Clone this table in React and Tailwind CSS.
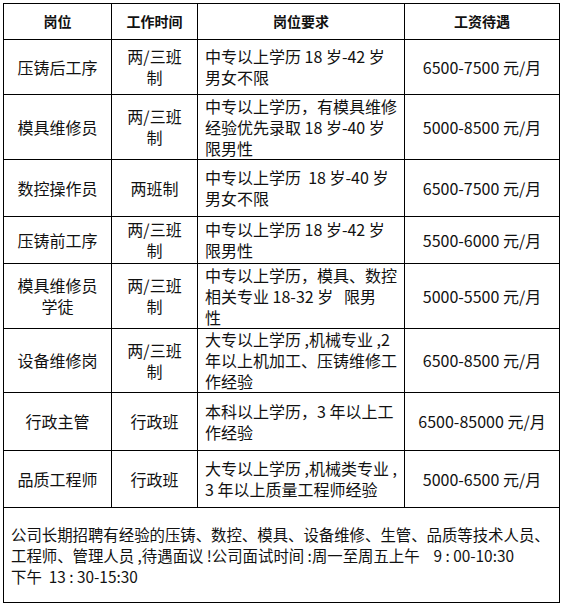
import React from 'react';

const rows = [
  { h: 'h-[55px]', name: ['压铸后工序'], shift: ['两/三班', '制'], req: ['中专以上学历 18 岁-42 岁', '男女不限'], pay: '6500-7500 元/月' },
  { h: 'h-[65px]', name: ['模具维修员'], shift: ['两/三班', '制'], req: ['中专以上学历，有模具维修', '经验优先录取 18 岁-40 岁', '限男性'], pay: '5000-8500 元/月' },
  { h: 'h-[57px]', name: ['数控操作员'], shift: ['两班制'], req: ['中专以上学历  18 岁-40 岁', '男女不限'], pay: '6500-7500 元/月' },
  { h: 'h-[47px]', name: ['压铸前工序'], shift: ['两/三班', '制'], req: ['中专以上学历 18 岁-42 岁', '限男性'], pay: '5500-6000 元/月' },
  { h: 'h-[65px]', name: ['模具维修员', '学徒'], shift: ['两/三班', '制'], req: ['中专以上学历，模具、数控', '相关专业 18-32 岁   限男', '性'], pay: '5000-5500 元/月' },
  { h: 'h-[64px]', name: ['设备维修岗'], shift: ['两/三班', '制'], req: ['大专以上学历 ,机械专业 ,2', '年以上机加工、压铸维修工', '作经验'], pay: '6500-8500 元/月' },
  { h: 'h-[58px]', name: ['行政主管'], shift: ['行政班'], req: ['本科以上学历，3 年以上工', '作经验'], pay: '6500-85000 元/月' },
  { h: 'h-[57px]', name: ['品质工程师'], shift: ['行政班'], req: ['大专以上学历 ,机械类专业 ,', '3 年以上质量工程师经验'], pay: '5000-6500 元/月' },
];

function Lines({ items }) {
  return items.map((t, i) => (
    <React.Fragment key={i}>
      {i > 0 && <br />}
      {t}
    </React.Fragment>
  ));
}

export default function App() {
  const cell = 'border border-black align-middle p-0';
  return (
    <div className="w-[562px] h-[606px] bg-white pt-[3px] pl-[3px] text-[#111] font-['Noto_Sans_CJK_SC','Microsoft_YaHei',sans-serif]">
      <table className="border-collapse table-fixed w-[556px]">
        <colgroup>
          <col className="w-[108px]" />
          <col className="w-[86px]" />
          <col className="w-[207px]" />
          <col className="w-[155px]" />
        </colgroup>
        <thead>
          <tr className="h-[36px] text-[14px] font-bold">
            <th className={cell + ' text-center'}>岗位</th>
            <th className={cell + ' text-center'}>工作时间</th>
            <th className={cell + ' text-center'}>岗位要求</th>
            <th className={cell + ' text-center'}>工资待遇</th>
          </tr>
        </thead>
        <tbody className="text-[16px] leading-[21px]">
          {rows.map((r, i) => (
            <tr key={i} className={r.h}>
              <td className={cell + ' text-center'}><Lines items={r.name} /></td>
              <td className={cell + ' text-center'}><Lines items={r.shift} /></td>
              <td className={cell + ' text-left pl-[7px] whitespace-pre'}><Lines items={r.req} /></td>
              <td className={cell + ' text-center whitespace-nowrap'}>{r.pay}</td>
            </tr>
          ))}
          <tr className="h-[95px]">
            <td colSpan={4} className={cell + ' px-[7px] text-[15.4px] leading-[21px] whitespace-pre'}>
              <Lines items={[
                '公司长期招聘有经验的压铸、数控、模具、设备维修、生管、品质等技术人员、',
                '工程师、管理人员 ,待遇面议 !公司面试时间 :周一至周五上午    9 : 00-10:30',
                '下午  13 : 30-15:30',
              ]} />
            </td>
          </tr>
        </tbody>
      </table>
    </div>
  );
}
